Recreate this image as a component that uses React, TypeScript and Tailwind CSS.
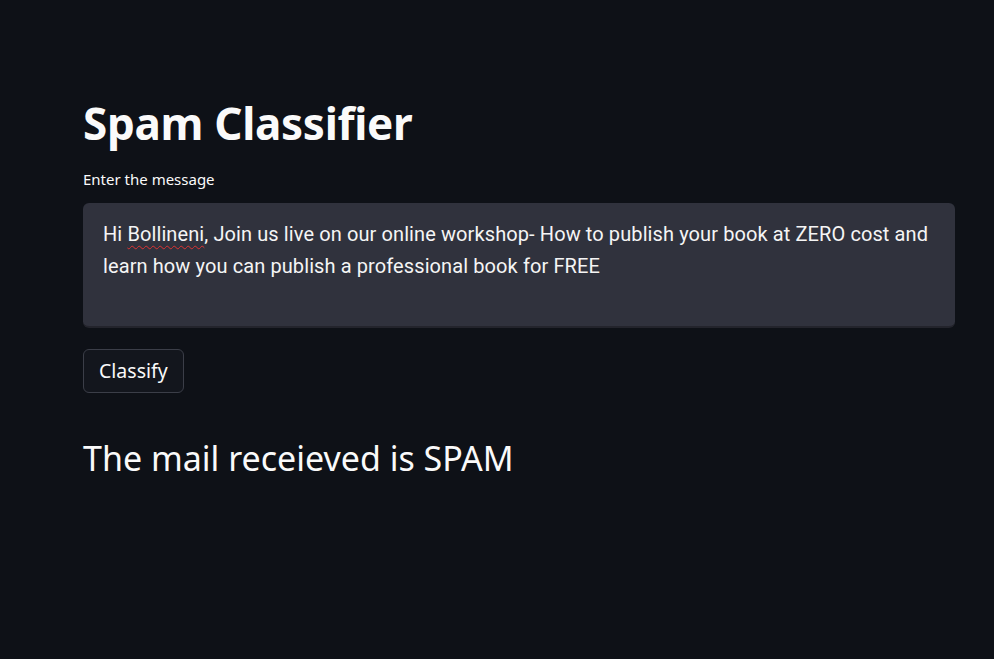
import React from 'react';

const App: React.FC = () => {
    return (
        <div className="min-h-[659px] w-full bg-[#0e1117] text-[#fafafa]" style={{ fontFamily: '"Noto Sans", "Open Sans", sans-serif' }}>
            <div className="pl-[83px] pr-[39px] pt-[92px]">
                {/* title */}
                <h1 className="text-[44px] font-bold leading-[62px] tracking-[-0.3px]">Spam Classifier</h1>

                {/* label */}
                <div className="mt-[15px] text-[15px] leading-[20px]">Enter the message</div>

                {/* textarea */}
                <div
                    className="mt-[14px] h-[125px] w-full rounded-[6px] border-b-2 border-[#23242c] bg-[#30323d] px-[20px] pt-[15px] text-[20px] leading-[32px] tracking-[0.1px] text-[#f5f5f5]"
                    style={{ fontFamily: 'Roboto, "Noto Sans", sans-serif' }}
                >
                    Hi <span className="underline decoration-wavy decoration-[#d33] decoration-1 underline-offset-[4px]">Bollineni</span>, Join us live on our online workshop- How to publish your book at ZERO cost and learn how you can publish a professional book for FREE
                </div>

                {/* button */}
                <button className="mt-[21px] h-[44px] rounded-[6px] border border-[#3b3e48] bg-[#13161d] px-[15px] text-[19.5px] text-[#fafafa]">
                    Classify
                </button>

                {/* result */}
                <div className="mt-[41px] text-[34px] leading-[48px]">The mail receieved is SPAM</div>
            </div>
        </div>
    );
};

export default App;
